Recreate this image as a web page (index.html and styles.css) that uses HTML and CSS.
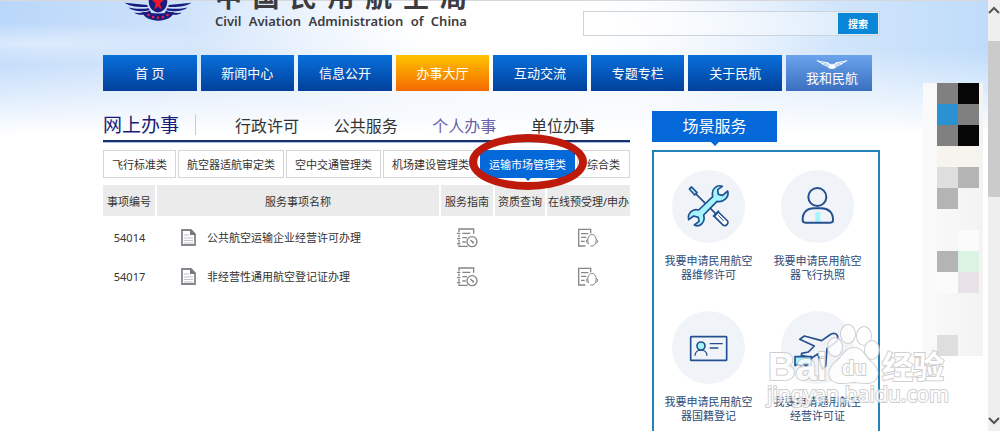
FILE: index.html
```html
<!DOCTYPE html>
<html lang="zh-CN">
<head>
    <meta charset="UTF-8">
    <meta name="viewport" content="width=device-width, initial-scale=1.0">
    <title>中国民用航空局 - 办事大厅</title>
    <link rel="stylesheet" href="styles.css">
</head>
<body>
    <svg class="symbols" aria-hidden="true">
        <symbol id="doc" viewBox="0 0 15 17">
            <path d="M1 1h9l4 4v11H1z" fill="#fff" stroke="#85858d" stroke-width="1.800"/>
            <path d="M9 0l6 6H9z" fill="#77777f"/>
            <path d="M3 6h5M3 9h9M3 11.500h9M3 14h9" stroke="#c3c3c8"/>
        </symbol>
        <symbol id="guide" viewBox="0 0 64 60">
            <g fill="none" stroke="#85858a" stroke-width="4">
                <path d="M8 12V3h44v14M8 20v8M8 36v8M8 50v5h26M2 16h10M2 32h10M2 47h10M18 16h24M18 29h14M18 42h10"/>
                <circle cx="47" cy="41" r="15"/>
                <path d="M42 36l10 10"/>
            </g>
            <path d="M46 40l8 1-5 6z" fill="#85858a"/>
        </symbol>
        <symbol id="apply" viewBox="0 0 64 60">
            <g fill="none" stroke="#85858a" stroke-width="4">
                <path d="M24 54H4V4h36v12M11 17h22M11 28h16M11 40h11"/>
                <path d="M34 48c-4-8-3-16 0-22 5-9 16-9 20 0 3 6 4 14 0 22l-7 6h-8" stroke-width="3"/>
                <path d="M31 34c-5 1-5 11 0 12M57 34c5 1 5 11 0 12" stroke-width="3"/>
            </g>
        </symbol>
    </svg>

    <div class="page">
        <div class="site">
            <header class="header">
                <div class="brand">
                    <svg class="emblem" viewBox="0 0 204 64" aria-hidden="true">
                        <g fill="#1a1c80">
                            <path d="M0 8l70 7v6C36 22 16 19 0 8zM12 23c18 4 40 5 62 2l3 6c-26 6-50 4-65-8zM30 39c20 1 33-1 48-6l4 7c-20 6-40 8-52-1z"/>
                            <path d="M204 8l-70 7v6c34 1 54-2 70-13zM192 23c-18 4-40 5-62 2l-3 6c26 6 50 4 65-8zM174 39c-20 1-33-1-48-6l-4 7c20 6 40 8 52-1z"/>
                            <path d="M74 0h56c2 18-8 36-28 38C82 36 72 18 74 0z"/>
                            <path d="M54 36q48 10 96 0c-6 36-88 36-96 0z"/>
                        </g>
                        <path d="M84 0h36l-12 11 5 18-11-9-12 9 5-18z" fill="#f0142d"/>
                        <g fill="#e52348">
                            <circle cx="73" cy="46" r="4"/><circle cx="87" cy="52" r="4"/><circle cx="102" cy="54" r="4"/><circle cx="117" cy="52" r="4"/><circle cx="131" cy="46" r="4"/>
                        </g>
                    </svg>
                    <div class="brand-name">
                        <div class="name-cn"><span>中</span><span>国</span><span>民</span><span>用</span><span>航</span><span>空</span><span>局</span></div>
                        <div class="name-en"><span>Civil</span> <span>Aviation</span> <span>Administration</span> <span>of</span> <span>China</span></div>
                    </div>
                </div>
                <form class="search">
                    <input type="text" aria-label="搜索">
                    <button type="button">搜索</button>
                </form>
            </header>

            <nav class="nav">
                <a href="#">首 页</a>
                <a href="#">新闻中心</a>
                <a href="#">信息公开</a>
                <a href="#" class="current">办事大厅</a>
                <a href="#">互动交流</a>
                <a href="#">专题专栏</a>
                <a href="#">关于民航</a>
                <a href="#" class="mine">
                    <svg viewBox="0 0 98 28" aria-hidden="true">
                        <path d="M0 0c16 6 30 3 39 9l7 6 3-5 3 5 7-6C68 3 82 6 98 0c-5 6-9 8-14 9-2 4-6 5-9 6-3 4-7 5-11 5-4 6-10 7-15 8-5-1-11-2-15-8-4 0-8-1-11-5-3-1-7-2-9-6C9 8 5 6 0 0z" fill="#fff"/>
                        <path d="M14 7c10 2 20 3 27 11M24 14c6 1 10 3 15 7M84 7c-10 2-20 3-27 11M74 14c-6 1-10 3-15 7" fill="none" stroke="#6f9fe2" stroke-width="2"/>
                    </svg>
                    我和民航
                </a>
            </nav>

            <div class="content">
                <main class="services">
                    <div class="section-bar">
                        <h2>网上办事</h2>
                        <div class="section-links">
                            <a href="#">行政许可</a>
                            <a href="#">公共服务</a>
                            <a href="#" class="visited">个人办事</a>
                            <a href="#">单位办事</a>
                        </div>
                    </div>
                    <div class="tabs">
                        <button type="button">飞行标准类</button>
                        <button type="button">航空器适航审定类</button>
                        <button type="button">空中交通管理类</button>
                        <button type="button">机场建设管理类</button>
                        <button type="button" class="active">运输市场管理类</button>
                        <button type="button">综合类</button>
                    </div>
                    <table class="items">
                        <thead>
                            <tr>
                                <th class="col-id">事项编号</th>
                                <th>服务事项名称</th>
                                <th class="col-guide">服务指南</th>
                                <th class="col-query">资质查询</th>
                                <th class="col-apply">在线预受理/申办</th>
                            </tr>
                        </thead>
                        <tbody>
                            <tr>
                                <td>54014</td>
                                <td><a href="#" class="item-name"><svg class="doc"><use href="#doc"/></svg>公共航空运输企业经营许可办理</a></td>
                                <td><a href="#" aria-label="服务指南"><svg class="action"><use href="#guide"/></svg></a></td>
                                <td></td>
                                <td><a href="#" aria-label="在线预受理"><svg class="action"><use href="#apply"/></svg></a></td>
                            </tr>
                            <tr>
                                <td>54017</td>
                                <td><a href="#" class="item-name"><svg class="doc"><use href="#doc"/></svg>非经营性通用航空登记证办理</a></td>
                                <td><a href="#" aria-label="服务指南"><svg class="action"><use href="#guide"/></svg></a></td>
                                <td></td>
                                <td><a href="#" aria-label="在线预受理"><svg class="action"><use href="#apply"/></svg></a></td>
                            </tr>
                        </tbody>
                    </table>
                </main>

                <aside class="scenes">
                    <h2>场景服务</h2>
                    <div class="scene-grid">
                        <a href="#">
                            <svg viewBox="95 209 219 219" aria-hidden="true">
                                <g transform="translate(142 255)" fill="none" stroke="#24508f" stroke-width="5" stroke-linejoin="round">
                                    <path d="M24 25l32 32M66 67l20 20M76 94l18-18"/>
                                    <path d="M5 11l7-6 16 17-7 7z" fill="#a9effa"/>
                                    <path d="M80 93l12-13 28 27c4 8-5 17-13 13z" fill="#fff"/>
                                    <path d="M92 90l16 17" stroke-width="3"/>
                                    <path d="M104 3C88-3 70 10 75 34L33 74C15 68-2 85 3 103l15-11 14 4 2 12-14 11c16 8 34-7 28-30l40-41c18 4 38-12 32-31l-15 13-13-3-2-14z" fill="#a5f3fb"/>
                                </g>
                            </svg>
                            <span>我要申请民用航空器维修许可</span>
                        </a>
                        <a href="#">
                            <svg viewBox="422 209 219 219" aria-hidden="true">
                                <path d="M525 336h15v29h-15z" fill="#a5f3fb"/>
                                <g fill="none" stroke="#24508f" stroke-width="6">
                                    <circle cx="531" cy="290" r="27"/>
                                    <path d="M487 360c-1-24 14-36 34-36h22c20 0 36 12 35 36q0 7-8 7h-75q-8 0-8-7z"/>
                                </g>
                            </svg>
                            <span>我要申请民用航空器飞行执照</span>
                        </a>
                        <a href="#">
                            <svg viewBox="93 63 219 219" aria-hidden="true">
                                <g fill="none" stroke="#24508f" stroke-width="5">
                                    <rect x="149" y="140" width="108" height="71" rx="2"/>
                                    <circle cx="180" cy="168" r="12" fill="#a5f3fb"/>
                                    <path d="M162 197c0-22 36-22 36 0M206 161h39M206 174h26" stroke-width="4"/>
                                </g>
                            </svg>
                            <span>我要申请民用航空器国籍登记</span>
                        </a>
                        <a href="#">
                            <svg viewBox="424 63 219 219" aria-hidden="true">
                                <g fill="none" stroke="#24508f" stroke-width="5" stroke-linejoin="round">
                                    <path d="M594 140c-2-12-14-12-24-5l-24 17-52-14-14 10 44 20-18 18-20 4-1 6 16 4 15 4 18-12 14 46 10-10 4-52 25-18q9-7 7-18z"/>
                                    <path d="M466 200h49v27l-8-5-8 5-8-5-8 5-8-5-9 5z" fill="#a5f3fb"/>
                                </g>
                            </svg>
                            <span>我要申请通用航空经营许可证</span>
                        </a>
                    </div>
                </aside>
            </div>

            <div class="mosaic" aria-hidden="true">
                <i class="gray"></i><i class="black"></i>
                <i class="blue"></i><i class="gray"></i>
                <i class="gray"></i><i class="black"></i>
                <i class="cream"></i><i class="cream"></i>
                <i class="light"></i><i class="silver"></i>
                <i class="silver"></i><i></i>
                <i></i><i></i>
                <i></i><i class="white"></i>
                <i class="silver"></i><i class="mint"></i>
                <i class="white"></i><i class="lilac"></i>
                <i></i><i></i>
                <i></i><i></i>
                <i class="light"></i><i></i>
            </div>

            <svg class="watermark" viewBox="0 0 190 90">
                <g fill="#fff" stroke="#c4c4c4" stroke-width="2" paint-order="stroke">
                    <text x="3" y="59" class="wm-latin">Bai</text>
                    <ellipse cx="83" cy="13" rx="7" ry="9"/>
                    <ellipse cx="99" cy="15" rx="7" ry="9"/>
                    <ellipse cx="70" cy="26" rx="7" ry="9"/>
                    <ellipse cx="107" cy="29" rx="7" ry="9"/>
                    <path d="M89 27c-9 0-11 8-17 13-7 6-9 11-7 16 3 8 13 6 24 5 11 1 20 3 23-5 2-5 0-10-7-16-6-5-7-13-16-13z"/>
                    <text x="77" y="54" class="wm-du">du</text>
                    <text x="117" y="57" class="wm-cn">经验</text>
                    <text x="2" y="81" class="wm-url">jingyan.baidu.com</text>
                </g>
            </svg>
        </div>

        <div class="scrollbar" aria-hidden="true">
            <svg viewBox="0 0 12 8"><path d="M1 7l5-5 5 5"/></svg>
            <div class="thumb"></div>
            <svg viewBox="0 0 12 8"><path d="M1 1l5 5 5-5"/></svg>
        </div>
    </div>
</body>
</html>
```

FILE: styles.css
```css
* {
    box-sizing: border-box;
}
body {
    margin: 0;
    font-family: "Noto Sans", "Noto Sans CJK SC", sans-serif;
    font-size: 11px;
    color: #333;
    background: #fff;
}
a {
    color: inherit;
    text-decoration: none;
}
h2 {
    margin: 0;
    font-weight: 400;
}
button {
    font-family: inherit;
    cursor: pointer;
}
.symbols {
    display: none;
}

.page {
    display: flex;
    min-height: 100vh;
}
.site {
    position: relative;
    flex: 1;
    display: flex;
    flex-direction: column;
    min-width: 0;
    padding: 0 108px 0 103px;
    background:
        linear-gradient(#d8d8dc, #d8d8dc) top / 100% 1px no-repeat,
        linear-gradient(rgba(255, 255, 255, 0) 50px, #fff 135px),
        radial-gradient(ellipse 230px 22px at 3% 44px, rgba(255, 255, 255, 0.5), transparent),
        radial-gradient(ellipse 330px 100px at 52% 25px, #fff 30%, transparent),
        linear-gradient(to right, #b9d7fa, #d5e6fb 25%, #e8f1fc 65%, #bfdcfa);
}

/* header */
.header {
    display: flex;
    justify-content: space-between;
    height: 55px;
    overflow: hidden;
}
.brand {
    display: flex;
    gap: 23px;
    padding-left: 21px;
}
.emblem {
    width: 68px;
    height: 21px;
}
.brand-name {
    width: 252px;
    color: #3c3c40;
}
.name-cn,
.name-en {
    display: flex;
    justify-content: space-between;
}
.name-cn {
    margin-top: -18px;
    font-size: 27px;
    font-weight: 700;
    line-height: 30px;
}
.name-en {
    font-family: "Noto Sans", sans-serif;
    font-size: 13px;
    font-weight: 600;
    line-height: 18px;
}
.search {
    display: flex;
    width: 297px;
    height: 25px;
    margin-top: 11px;
    padding: 1px;
    border: 1px solid #ccd3da;
    background: rgba(255, 255, 255, 0.3);
}
.search input {
    flex: 1;
    min-width: 0;
    border: 0;
    background: none;
}
.search button {
    width: 40px;
    padding: 0;
    border: 0;
    background: #0a86d8;
    color: #fff;
    font-size: 10px;
    font-weight: 700;
}

/* main navigation */
.nav {
    display: flex;
    gap: 4px;
    padding-right: 8px;
}
.nav a {
    flex: 1;
    height: 36px;
    background: linear-gradient(#0870db, #01409b);
    color: #fff;
    font-size: 13px;
    line-height: 36px;
    text-align: center;
}
.nav .current {
    background: linear-gradient(#ffc400, #f46800);
}
.nav .mine {
    flex: 0 0 86px;
    display: flex;
    flex-direction: column;
    align-items: center;
    padding: 5px 0 0 6px;
    background: linear-gradient(#6ba3ec, #3a6fc0);
    line-height: 18px;
}
.mine svg {
    width: 32px;
    height: 9px;
}

.content {
    flex: 1;
    display: flex;
    gap: 22px;
    margin-top: 20px;
}
.services {
    flex: 1;
    min-width: 0;
}

/* section title and its links */
.section-bar {
    display: flex;
    height: 31px;
    border-bottom: 2px solid #19306e;
    box-shadow: 0 1px #a9c3e8;
    line-height: 28px;
}
.section-bar h2 {
    color: #1a1a78;
    font-size: 19px;
}
.section-links {
    flex: 1;
    display: flex;
    justify-content: space-between;
    height: 21px;
    margin: 3px 0 0 16px;
    padding: 0 35px 0 39px;
    border-left: 1px solid #ccc;
    font-size: 16px;
    line-height: 24px;
}
.section-links .visited {
    color: #6a60a8;
}

/* category tabs */
.tabs {
    display: flex;
    gap: 2px;
    margin-top: 8px;
}
.tabs button {
    height: 28px;
    padding: 0 8px;
    border: 1px solid #d5d5d5;
    background: #fff;
    color: #333;
    font-size: 11px;
    white-space: nowrap;
}
.tabs button:last-child {
    flex: 1;
}
.tabs .active {
    position: relative;
    border-color: #0568d8;
    background: #0568d8;
    color: #fff;
}
.tabs .active::before {
    content: "";
    position: absolute;
    left: 50%;
    top: 100%;
    margin-left: -4px;
    border: 4px solid transparent;
    border-top-color: #0568d8;
}
.tabs .active::after {
    content: "";
    position: absolute;
    z-index: 1;
    inset: -17px -13px -13px -12px;
    border: 8px solid #bd1a0c;
    border-radius: 50%;
}

/* list of items */
.items {
    width: 100%;
    margin-top: 7px;
    border-collapse: collapse;
    table-layout: fixed;
}
.items th {
    height: 31px;
    padding: 0;
    border-right: 2px solid #fff;
    background: #ebebeb;
    font-weight: 400;
    white-space: nowrap;
}
.items td {
    height: 39px;
    padding: 4px 0 0;
    line-height: 16px;
    text-align: center;
}
.items th:last-child {
    border-right: 0;
}
.col-id {
    width: 53px;
}
.col-guide {
    width: 54px;
}
.col-query {
    width: 52px;
}
.col-apply {
    width: 84px;
}
.item-name {
    display: flex;
    align-items: center;
    gap: 11px;
    padding-left: 25px;
}
.doc {
    width: 15px;
    height: 17px;
}
.action {
    display: block;
    width: 22px;
    height: 20px;
    margin: 0 auto;
}

/* scene services */
.scenes {
    display: flex;
    flex-direction: column;
    width: 228px;
}
.scenes h2 {
    position: relative;
    width: 125px;
    margin-bottom: 8px;
    background: #0568d8;
    color: #fff;
    font-size: 16px;
    line-height: 31px;
    text-align: center;
}
.scenes h2::after {
    content: "";
    position: absolute;
    left: 50%;
    top: 100%;
    margin-left: -4px;
    border: 4px solid transparent;
    border-top-color: #0568d8;
}
.scene-grid {
    flex: 1;
    display: grid;
    grid-template-columns: 1fr 1fr;
    align-content: start;
    row-gap: 29px;
    padding: 18px 6px 0 0;
    border: 2px solid #2581b9;
    border-bottom: 0;
    background: #fff;
}
.scene-grid a {
    display: flex;
    flex-direction: column;
    align-items: center;
    gap: 11px;
    color: #2c4a78;
    line-height: 14px;
    text-align: center;
}
.scene-grid svg {
    width: 73px;
    height: 73px;
    border-radius: 50%;
    background: #f0f4f8;
}
.scene-grid span {
    width: 94px;
}

/* pixelated floating panel */
.mosaic {
    position: absolute;
    top: 83px;
    right: 5px;
    display: grid;
    grid-template-columns: 21px 21px;
    grid-auto-rows: 21px;
    padding: 0 4px 0 14px;
    background: linear-gradient(to right, #fafafa, #f3f3f3);
}
.mosaic .gray { background: #808080; }
.mosaic .black { background: #060606; }
.mosaic .blue { background: #2a92d0; }
.mosaic .cream { background: #f7f3ef; }
.mosaic .light { background: #dedede; }
.mosaic .silver { background: #b4b4b4; }
.mosaic .mint { background: #daf3e2; }
.mosaic .white { background: #fbfbfb; }
.mosaic .lilac { background: #e8e1e8; }

.watermark {
    position: absolute;
    right: 33px;
    bottom: 20px;
    width: 190px;
    height: 90px;
    opacity: 0.8;
    pointer-events: none;
}
.wm-latin {
    font: 700 38px "Liberation Sans", sans-serif;
}
.wm-du {
    font: 700 20px "Liberation Sans", sans-serif;
}
.wm-cn {
    font: 700 31px "Noto Sans CJK SC", sans-serif;
}
.wm-url {
    font: 400 21px "Noto Sans", sans-serif;
}

/* scrollbar */
.scrollbar {
    display: flex;
    flex-direction: column;
    align-items: center;
    width: 12px;
    padding: 6px 0;
    background: #efefef;
}
.scrollbar svg {
    width: 12px;
    height: 8px;
    fill: none;
    stroke: #555;
    stroke-width: 2;
}
.thumb {
    width: 100%;
    height: 156px;
    margin: 27px 0 auto;
    background: #cbcbcb;
}
```
